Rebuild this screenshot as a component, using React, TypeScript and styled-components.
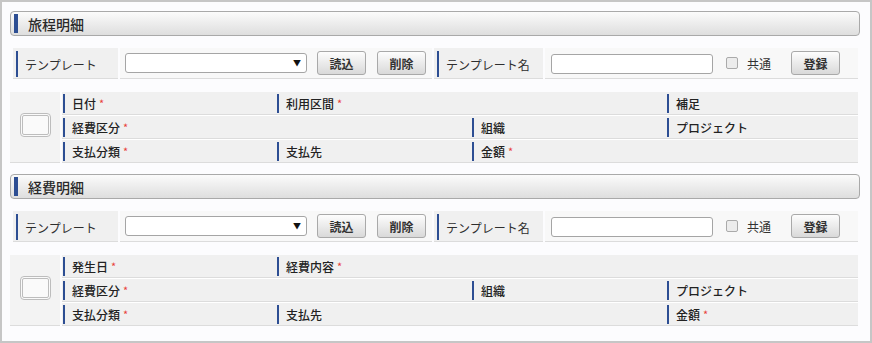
import React from "react";
import styled, { createGlobalStyle } from "styled-components";

const GlobalStyle = createGlobalStyle`
  body {
    margin: 0;
    background: #fcfcfe;
  }
`;

type Field = { label?: string; req?: boolean; span?: number };

const travelRows: Field[][] = [
  [
    { label: "日付", req: true },
    { label: "利用区間", req: true, span: 2 },
    { label: "補足" },
  ],
  [
    { label: "経費区分", req: true, span: 2 },
    { label: "組織" },
    { label: "プロジェクト" },
  ],
  [
    { label: "支払分類", req: true },
    { label: "支払先" },
    { label: "金額", req: true },
    {},
  ],
];

const expenseRows: Field[][] = [
  [
    { label: "発生日", req: true },
    { label: "経費内容", req: true, span: 3 },
  ],
  [
    { label: "経費区分", req: true, span: 2 },
    { label: "組織" },
    { label: "プロジェクト" },
  ],
  [
    { label: "支払分類", req: true },
    { label: "支払先", span: 2 },
    { label: "金額", req: true },
  ],
];

const Section = ({ title, rows }: { title: string; rows: Field[][] }) => (
  <>
    <Header>
      <Marker />
      {title}
    </Header>
    <TemplateRow>
      <LabelCell $w={105}>
        <LabelText>テンプレート</LabelText>
      </LabelCell>
      <FieldCell $w={312}>
        <Select>
          <Arrow>▼</Arrow>
        </Select>
        <Button $ml={10}>読込</Button>
        <Button $ml={11}>削除</Button>
      </FieldCell>
      <LabelCell $w={109}>
        <LabelText>テンプレート名</LabelText>
      </LabelCell>
      <FieldCell>
        <TextInput />
        <Check />
        <CheckText>共通</CheckText>
        <Button $ml={20}>登録</Button>
      </FieldCell>
    </TemplateRow>
    <Table>
      <SelectCell>
        <RowCheck />
      </SelectCell>
      <Grid>
        {rows.map((row, i) =>
          row.map((f, j) => (
            <Cell key={i + "-" + j} $span={f.span || 1}>
              {f.label && (
                <CellLabel>
                  {f.label}
                  {f.req && <Req>*</Req>}
                </CellLabel>
              )}
            </Cell>
          ))
        )}
      </Grid>
    </Table>
  </>
);

export default function App() {
  return (
    <>
      <GlobalStyle />
      <Frame>
        <Section title="旅程明細" rows={travelRows} />
        <Section title="経費明細" rows={expenseRows} />
      </Frame>
    </>
  );
}

const Frame = styled.div`
  width: 872px;
  height: 343px;
  box-sizing: border-box;
  border: 2px solid #c6c6c6;
  background: #fcfcfe;
  padding: 9px 10px 0 8px;
  font-family: "Noto Sans CJK JP", "Noto Sans", sans-serif;
  color: #333;
`;

const Header = styled.div`
  height: 25px;
  box-sizing: border-box;
  border: 1px solid #a9a9a9;
  border-radius: 4px;
  background: linear-gradient(#fbfbfb, #dedede);
  display: flex;
  align-items: center;
  padding-left: 3px;
  margin-bottom: 12px;
  font-size: 14px;
  font-weight: 500;
  color: #2a2a2a;
`;

const Marker = styled.span`
  width: 4px;
  height: 19px;
  background: #2d4e93;
  margin-right: 10px;
`;

const TemplateRow = styled.div`
  display: flex;
  gap: 2px;
  height: 31px;
  margin: 0 2px 13px 3px;
`;

const LabelCell = styled.div<{ $w: number }>`
  width: ${(p) => p.$w}px;
  box-sizing: border-box;
  background: #f0f0f0;
  border-bottom: 1px solid #dcdcdc;
  padding: 3px 0 1px 3px;
  display: flex;
`;

const LabelText = styled.div`
  flex: 1;
  display: flex;
  align-items: center;
  border-left: 2px solid #2d4e93;
  padding-left: 7px;
  font-size: 12px;
  color: #2e2e2e;
`;

const FieldCell = styled.div<{ $w?: number }>`
  ${(p) => (p.$w ? `width: ${p.$w}px;` : "flex: 1;")}
  box-sizing: border-box;
  background: #f8f8f8;
  border-bottom: 1px solid #dcdcdc;
  display: flex;
  align-items: center;
  padding-left: 5px;
`;

const Select = styled.div`
  width: 182px;
  height: 20px;
  box-sizing: border-box;
  border: 1px solid #a5a5a5;
  border-radius: 3px;
  background: #fff;
  display: flex;
  align-items: center;
  justify-content: flex-end;
  padding-right: 5px;
`;

const Arrow = styled.span`
  font-size: 8px;
  color: #111;
  line-height: 1;
`;

const Button = styled.button<{ $ml: number }>`
  width: 49px;
  height: 24px;
  margin-left: ${(p) => p.$ml}px;
  padding: 0;
  border: 1px solid #a9a9a9;
  border-radius: 3px;
  background: linear-gradient(#fdfdfd, #d9d9d9);
  font-family: inherit;
  font-size: 12px;
  font-weight: 600;
  color: #333;
`;

const TextInput = styled.div`
  width: 162px;
  height: 20px;
  margin: 2px 0 0 1px;
  box-sizing: border-box;
  border: 1px solid #a5a5a5;
  border-radius: 3px;
  background: #fff;
`;

const Check = styled.span`
  width: 12px;
  height: 12px;
  margin-left: 13px;
  box-sizing: border-box;
  border: 1px solid #aaa;
  border-radius: 2px;
  background: #ececec;
`;

const CheckText = styled.span`
  margin-left: 9px;
  font-size: 12px;
`;

const Table = styled.div`
  display: flex;
  gap: 2px;
  height: 71px;
  margin: 0 2px 11px 0;
`;

const SelectCell = styled.div`
  width: 50px;
  box-sizing: border-box;
  background: #f3f3f3;
  border-bottom: 1px solid #dcdcdc;
  display: flex;
  align-items: center;
  justify-content: center;
  padding-bottom: 4px;
`;

const RowCheck = styled.span`
  width: 31px;
  height: 24px;
  box-sizing: border-box;
  border: 3px double #bdbdbd;
  border-radius: 4px;
  background: #fafafa;
`;

const Grid = styled.div`
  flex: 1;
  display: grid;
  grid-template-columns: 214px 195px 195px 1fr;
  grid-template-rows: repeat(3, 23px);
  row-gap: 1px;
  background: #fff;
`;

const Cell = styled.div<{ $span: number }>`
  grid-column: span ${(p) => p.$span};
  box-sizing: border-box;
  background: #f0f0f0;
  border-bottom: 1px solid #dcdcdc;
  padding: 2px 0 1px 1px;
  display: flex;
`;

const CellLabel = styled.div`
  flex: 1;
  display: flex;
  align-items: center;
  border-left: 2px solid #2d4e93;
  padding-left: 7px;
  font-size: 12px;
  font-weight: 500;
  color: #222;
`;

const Req = styled.span`
  margin-left: 3px;
  color: #e8403a;
  font-size: 11px;
  font-weight: 400;
  position: relative;
  top: -1px;
`;
